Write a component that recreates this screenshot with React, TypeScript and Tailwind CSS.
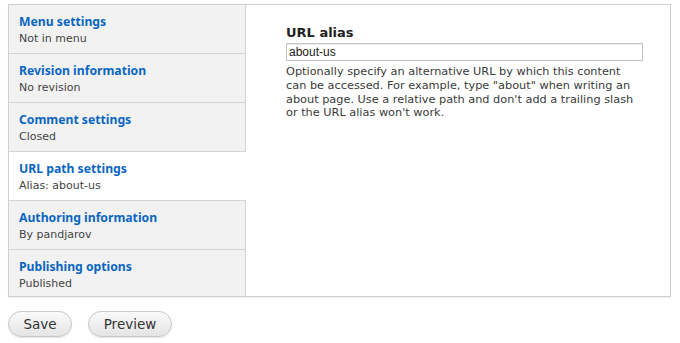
import React from 'react';

interface Tab {
  title: string;
  summary: string;
  active?: boolean;
}

const tabs: Tab[] = [
  { title: 'Menu settings', summary: 'Not in menu' },
  { title: 'Revision information', summary: 'No revision' },
  { title: 'Comment settings', summary: 'Closed' },
  { title: 'URL path settings', summary: 'Alias: about-us', active: true },
  { title: 'Authoring information', summary: 'By pandjarov' },
  { title: 'Publishing options', summary: 'Published' },
];

export default function App() {
  return (
    <main className="min-h-screen w-[680px] bg-white px-2 pt-1 font-['DejaVu_Sans',sans-serif] text-[#333]">
      {/* vertical tabs */}
      <div className="flex h-[293px] w-[663px] border border-[#cfcfcf] shadow-[0_1px_1px_rgba(0,0,0,0.05)]">
        <ul className="flex w-[237px] shrink-0 flex-col">
          {tabs.map((tab, i) => (
            <li
              key={tab.title}
              className={`px-[10px] pt-[8px] ${
                i < tabs.length - 1 ? 'h-[49px] border-b border-[#d4d4d4]' : 'flex-1'
              } ${tab.active ? 'bg-white' : 'border-r border-r-[#d4d4d4] bg-[#f2f2f2]'}`}
            >
              <div className="font-['Noto_Sans',sans-serif] text-[12.2px] font-bold leading-[17px] text-[#0a66c2]">
                {tab.title}
              </div>
              <div className="mt-[1px] text-[11px] leading-[15px] text-[#444]">{tab.summary}</div>
            </li>
          ))}
        </ul>

        {/* tab pane */}
        <div className="flex-1 pl-[40px] pr-[27px] pt-[20px]">
          <label className="block text-[13px] font-bold leading-[16px] text-[#222]">URL alias</label>
          <input
            readOnly
            value="about-us"
            className="mt-[2px] block h-[18px] w-full border border-[#c4c4c4] px-[2px] font-['Liberation_Sans',sans-serif] text-[12px] text-[#222] shadow-[inset_0_1px_1px_rgba(0,0,0,0.08)] outline-none"
          />
          <p className="mt-[4px] w-[352px] text-[11.3px] leading-[13.8px] text-[#3a3a3a]">
            Optionally specify an alternative URL by which this content can be accessed. For example,
            type "about" when writing an about page. Use a relative path and don't add a trailing slash
            or the URL alias won't work.
          </p>
        </div>
      </div>

      {/* actions */}
      <div className="mt-[14px] flex gap-[16px]">
        <button className="h-[26px] w-[64px] rounded-full border border-[#c8c8c8] bg-gradient-to-b from-[#fafafa] to-[#e4e4e4] text-[13.5px] text-[#333] shadow-[0_1px_1px_rgba(0,0,0,0.1)]">
          Save
        </button>
        <button className="h-[26px] w-[84px] rounded-full border border-[#c8c8c8] bg-gradient-to-b from-[#fafafa] to-[#e4e4e4] text-[13.5px] text-[#333] shadow-[0_1px_1px_rgba(0,0,0,0.1)]">
          Preview
        </button>
      </div>
    </main>
  );
}
